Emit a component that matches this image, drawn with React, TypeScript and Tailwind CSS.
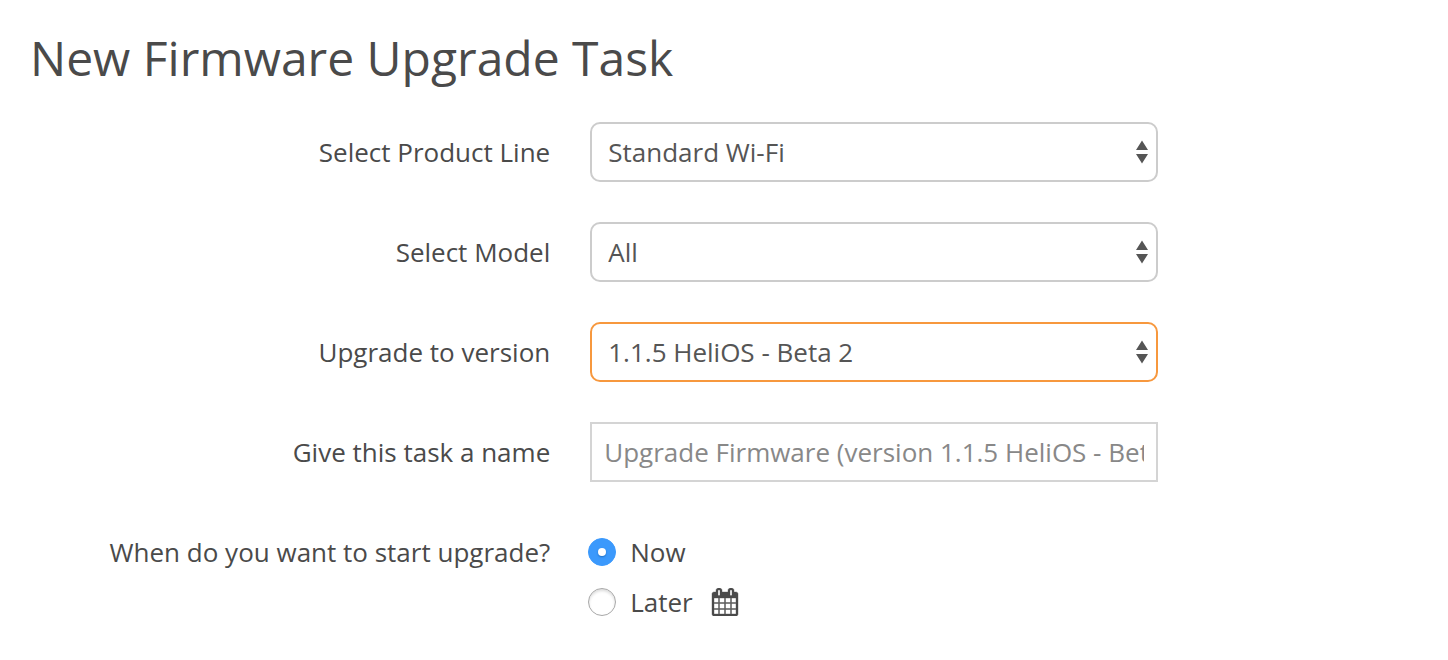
import { useState } from "react";

type Option = {
  value: string;
  label: string;
};

const productLines: Option[] = [{ value: "wifi", label: "Standard Wi-Fi" }];
const models: Option[] = [{ value: "all", label: "All" }];
const versions: Option[] = [{ value: "1.1.5-beta2", label: "1.1.5 HeliOS - Beta 2" }];

const labelStyle = "w-[38%] shrink-0 text-right";
const radioStyle =
  "grid size-7 shrink-0 appearance-none place-items-center rounded-full border border-[#a8a8a8] bg-white shadow-[inset_0_2px_3px_#dcdcdc] before:size-2 before:rounded-full before:bg-transparent checked:border-[#3b99fc] checked:bg-[#3b99fc] checked:shadow-none checked:before:bg-white checked:before:shadow-[0_1px_2px_#1f6fc4]";

const CalendarIcon = () => (
  <svg viewBox="0 0 1792 1792" className="size-7" fill="currentColor" stroke="currentColor" strokeWidth="24" aria-hidden="true">
    <path d="M192 1664h288v-288h-288v288zm352 0h320v-288h-320v288zm-352-352h288v-320h-288v320zm352 0h320v-320h-320v320zm-352-384h288v-288h-288v288zm736 736h320v-288h-320v288zm-384-736h320v-288h-320v288zm768 736h288v-288h-288v288zm-384-352h320v-320h-320v320zm-352-864v-288q0-13-9.5-22.5t-22.5-9.5h-64q-13 0-22.5 9.5t-9.5 22.5v288q0 13 9.5 22.5t22.5 9.5h64q13 0 22.5-9.5t9.5-22.5zm736 864h288v-320h-288v320zm-384-384h320v-288h-320v288zm384 0h288v-288h-288v288zm32-480v-288q0-13-9.5-22.5t-22.5-9.5h-64q-13 0-22.5 9.5t-9.5 22.5v288q0 13 9.5 22.5t22.5 9.5h64q13 0 22.5-9.5t9.5-22.5zm384-64v1280q0 52-38 90t-90 38h-1408q-52 0-90-38t-38-90v-1280q0-52 38-90t90-38h128v-96q0-66 47-113t113-47h64q66 0 113 47t47 113v96h384v-96q0-66 47-113t113-47h64q66 0 113 47t47 113v96h128q52 0 90 38t38 90z" />
  </svg>
);

const SelectRow = ({
  id,
  label,
  options,
  active = false,
}: {
  id: string;
  label: string;
  options: Option[];
  active?: boolean;
}) => {
  const [value, setValue] = useState(options[0].value);

  return (
    <div className="flex items-center gap-10">
      <label htmlFor={id} className={labelStyle}>
        {label}
      </label>
      <div className="relative max-w-[568px] flex-1">
        <select
          id={id}
          value={value}
          onChange={(e) => setValue(e.target.value)}
          className={`h-[60px] w-full appearance-none rounded-[10px] border-2 bg-white px-4 text-[#555555] outline-none ${
            active ? "border-[#f7983e]" : "border-[#cccccc]"
          }`}
        >
          {options.map((option) => (
            <option key={option.value} value={option.value}>
              {option.label}
            </option>
          ))}
        </select>
        {/* up / down arrows on the right edge */}
        <svg
          viewBox="0 0 12 24"
          className="pointer-events-none absolute inset-y-0 right-2.5 my-auto h-6 w-3"
          fill="#555555"
          aria-hidden="true"
        >
          <path d="M6 0.5L12 10H0zM0 14h12L6 23.5z" />
        </svg>
      </div>
    </div>
  );
};

const App: React.FC = () => {
  const [name, setName] = useState("");
  const [start, setStart] = useState("now");

  return (
    <main className="min-h-screen bg-white font-['Open_Sans',sans-serif] text-[26px] leading-[50px] text-[#4a4a4a]">
      <h1 className="px-[30px] pt-6 text-[48px] leading-[68px]">New Firmware Upgrade Task</h1>

      <form className="flex flex-col gap-10 pt-[30px]">
        <SelectRow id="product-line" label="Select Product Line" options={productLines} />
        <SelectRow id="model" label="Select Model" options={models} />
        <SelectRow id="version" label="Upgrade to version" options={versions} active />

        <div className="flex items-center gap-10">
          <label htmlFor="task-name" className={labelStyle}>
            Give this task a name
          </label>
          <div className="max-w-[568px] flex-1">
            <input
              id="task-name"
              type="text"
              value={name}
              onChange={(e) => setName(e.target.value)}
              placeholder="Upgrade Firmware (version 1.1.5 HeliOS - Beta 2)"
              className="h-[60px] w-full border-2 border-[#d4d4d4] px-3 outline-none placeholder:text-[#888888]"
            />
          </div>
        </div>

        <div role="radiogroup" aria-labelledby="start-label" className="flex gap-[38px] pt-[5px]">
          <span id="start-label" className={labelStyle}>
            When do you want to start upgrade?
          </span>
          <div>
            <label className="flex items-center gap-[14px]">
              <input
                type="radio"
                name="start"
                checked={start === "now"}
                onChange={() => setStart("now")}
                className={radioStyle}
              />
              Now
            </label>
            <div className="flex items-center gap-[18px]">
              <label className="flex items-center gap-[14px]">
                <input
                  type="radio"
                  name="start"
                  checked={start === "later"}
                  onChange={() => setStart("later")}
                  className={radioStyle}
                />
                Later
              </label>
              <button type="button" aria-label="Pick a date">
                <CalendarIcon />
              </button>
            </div>
          </div>
        </div>
      </form>
    </main>
  );
};

export default App;
